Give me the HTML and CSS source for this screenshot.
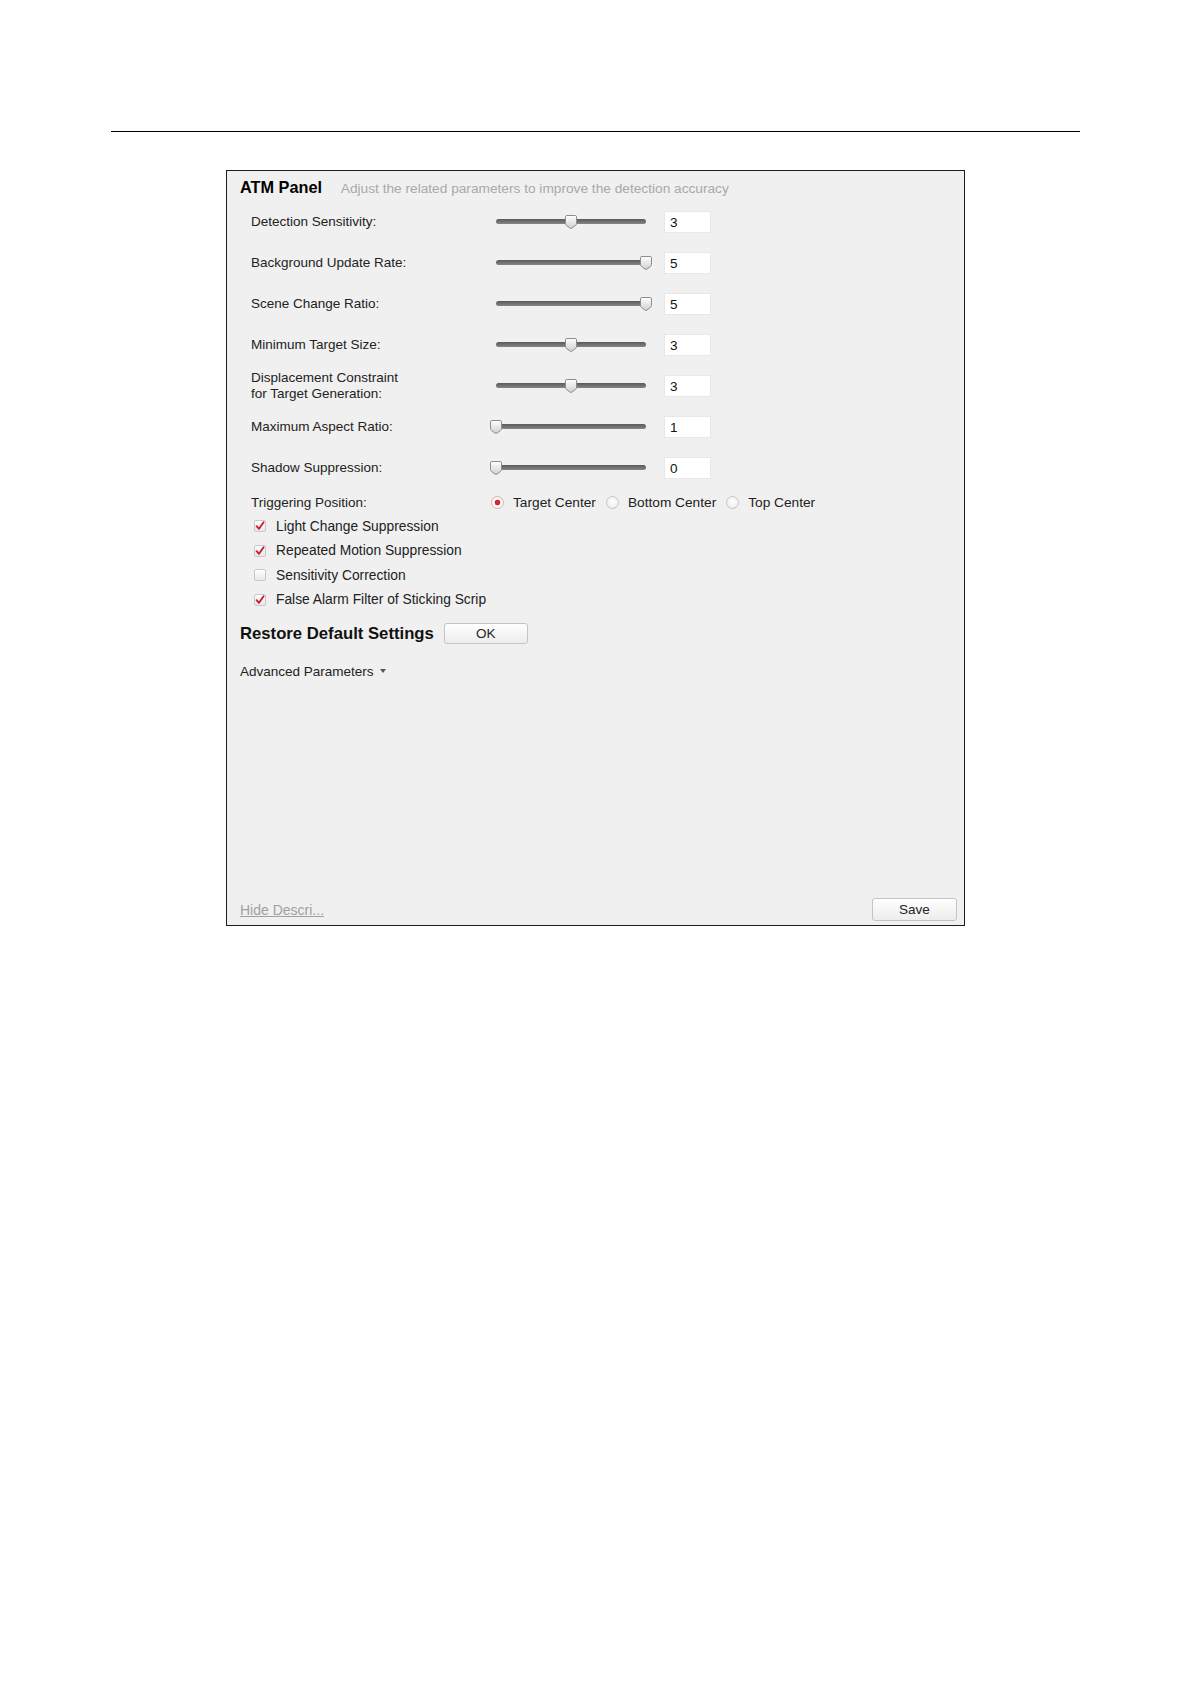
FILE: index.html
```html
<!DOCTYPE html>
<html lang="en">
<head>
<meta charset="utf-8">
<title>ATM Panel</title>
<link rel="stylesheet" href="styles.css">
</head>
<body>
<div class="page">
  <div class="rule"></div>
  <div class="panel">
    <div class="title">
      <span class="title-main">ATM Panel</span>
      <span class="title-desc">Adjust the related parameters to improve the detection accuracy</span>
    </div>

    <div class="params">
      <div class="param">
        <span class="label">Detection Sensitivity:</span>
        <div class="slider"><div class="track"></div><span class="thumb" style="left:50%"><svg viewBox="0 0 12 14" width="12" height="14"><defs><linearGradient id="tg" x1="0" y1="0" x2="0" y2="1"><stop offset="0" stop-color="#ffffff"/><stop offset="1" stop-color="#cfcfcf"/></linearGradient></defs><path d="M1.8 0.5H10.2Q11.5 0.5 11.5 1.8V8.6Q11.5 9.6 10.6 10.4L6.8 13.2Q6 13.7 5.2 13.2L1.4 10.4Q0.5 9.6 0.5 8.6V1.8Q0.5 0.5 1.8 0.5Z" fill="url(#tg)" stroke="#8c8c8c" stroke-width="1"/></svg></span></div>
        <div class="value">3</div>
      </div>
      <div class="param">
        <span class="label">Background Update Rate:</span>
        <div class="slider"><div class="track"></div><span class="thumb" style="left:100%"><svg viewBox="0 0 12 14" width="12" height="14"><path d="M1.8 0.5H10.2Q11.5 0.5 11.5 1.8V8.6Q11.5 9.6 10.6 10.4L6.8 13.2Q6 13.7 5.2 13.2L1.4 10.4Q0.5 9.6 0.5 8.6V1.8Q0.5 0.5 1.8 0.5Z" fill="url(#tg)" stroke="#8c8c8c" stroke-width="1"/></svg></span></div>
        <div class="value">5</div>
      </div>
      <div class="param">
        <span class="label">Scene Change Ratio:</span>
        <div class="slider"><div class="track"></div><span class="thumb" style="left:100%"><svg viewBox="0 0 12 14" width="12" height="14"><path d="M1.8 0.5H10.2Q11.5 0.5 11.5 1.8V8.6Q11.5 9.6 10.6 10.4L6.8 13.2Q6 13.7 5.2 13.2L1.4 10.4Q0.5 9.6 0.5 8.6V1.8Q0.5 0.5 1.8 0.5Z" fill="url(#tg)" stroke="#8c8c8c" stroke-width="1"/></svg></span></div>
        <div class="value">5</div>
      </div>
      <div class="param">
        <span class="label">Minimum Target Size:</span>
        <div class="slider"><div class="track"></div><span class="thumb" style="left:50%"><svg viewBox="0 0 12 14" width="12" height="14"><path d="M1.8 0.5H10.2Q11.5 0.5 11.5 1.8V8.6Q11.5 9.6 10.6 10.4L6.8 13.2Q6 13.7 5.2 13.2L1.4 10.4Q0.5 9.6 0.5 8.6V1.8Q0.5 0.5 1.8 0.5Z" fill="url(#tg)" stroke="#8c8c8c" stroke-width="1"/></svg></span></div>
        <div class="value">3</div>
      </div>
      <div class="param">
        <span class="label">Displacement Constraint<br>for Target Generation:</span>
        <div class="slider"><div class="track"></div><span class="thumb" style="left:50%"><svg viewBox="0 0 12 14" width="12" height="14"><path d="M1.8 0.5H10.2Q11.5 0.5 11.5 1.8V8.6Q11.5 9.6 10.6 10.4L6.8 13.2Q6 13.7 5.2 13.2L1.4 10.4Q0.5 9.6 0.5 8.6V1.8Q0.5 0.5 1.8 0.5Z" fill="url(#tg)" stroke="#8c8c8c" stroke-width="1"/></svg></span></div>
        <div class="value">3</div>
      </div>
      <div class="param">
        <span class="label">Maximum Aspect Ratio:</span>
        <div class="slider"><div class="track"></div><span class="thumb" style="left:0%"><svg viewBox="0 0 12 14" width="12" height="14"><path d="M1.8 0.5H10.2Q11.5 0.5 11.5 1.8V8.6Q11.5 9.6 10.6 10.4L6.8 13.2Q6 13.7 5.2 13.2L1.4 10.4Q0.5 9.6 0.5 8.6V1.8Q0.5 0.5 1.8 0.5Z" fill="url(#tg)" stroke="#8c8c8c" stroke-width="1"/></svg></span></div>
        <div class="value">1</div>
      </div>
      <div class="param">
        <span class="label">Shadow Suppression:</span>
        <div class="slider"><div class="track"></div><span class="thumb" style="left:0%"><svg viewBox="0 0 12 14" width="12" height="14"><path d="M1.8 0.5H10.2Q11.5 0.5 11.5 1.8V8.6Q11.5 9.6 10.6 10.4L6.8 13.2Q6 13.7 5.2 13.2L1.4 10.4Q0.5 9.6 0.5 8.6V1.8Q0.5 0.5 1.8 0.5Z" fill="url(#tg)" stroke="#8c8c8c" stroke-width="1"/></svg></span></div>
        <div class="value">0</div>
      </div>
    </div>

    <div class="trigger">
      <span class="label">Triggering Position:</span>
      <div class="radios">
        <span class="radio checked"></span><span class="radio-text">Target Center</span>
        <span class="radio"></span><span class="radio-text">Bottom Center</span>
        <span class="radio"></span><span class="radio-text">Top Center</span>
      </div>
    </div>

    <ul class="checks">
      <li class="check-row"><span class="box"><svg viewBox="0 0 12 12" width="12" height="12"><path d="M2.6 6.2L5 8.8L9.6 2.2" fill="none" stroke="#cc1f2e" stroke-width="1.9" stroke-linecap="round" stroke-linejoin="round"/></svg></span>Light Change Suppression</li>
      <li class="check-row"><span class="box"><svg viewBox="0 0 12 12" width="12" height="12"><path d="M2.6 6.2L5 8.8L9.6 2.2" fill="none" stroke="#cc1f2e" stroke-width="1.9" stroke-linecap="round" stroke-linejoin="round"/></svg></span>Repeated Motion Suppression</li>
      <li class="check-row"><span class="box"></span>Sensitivity Correction</li>
      <li class="check-row"><span class="box"><svg viewBox="0 0 12 12" width="12" height="12"><path d="M2.6 6.2L5 8.8L9.6 2.2" fill="none" stroke="#cc1f2e" stroke-width="1.9" stroke-linecap="round" stroke-linejoin="round"/></svg></span>False Alarm Filter of Sticking Scrip</li>
    </ul>

    <div class="restore">
      <span class="restore-title">Restore Default Settings</span>
      <button class="btn btn-ok">OK</button>
    </div>

    <div class="advanced">Advanced Parameters<span class="caret"></span></div>

    <div class="footer">
      <a class="hide-link">Hide Descri...</a>
      <button class="btn btn-save">Save</button>
    </div>
  </div>
</div>
</body>
</html>
```

FILE: styles.css
```css
html, body {
  margin: 0;
  padding: 0;
  background: #ffffff;
}

body {
  font-family: "Liberation Sans", Arial, sans-serif;
  font-size: 13.5px;
  color: #222222;
}

.page {
  padding: 131px 0 0 111px;
}

.rule {
  width: 969px;
  height: 0;
  border-top: 1px solid #000000;
}

.panel {
  box-sizing: border-box;
  width: 739px;
  height: 756px;
  margin: 38px 0 0 115px;
  border: 1px solid #1e1e1e;
  background: #f0f0f0;
  padding-top: 6px;
  display: flex;
  flex-direction: column;
}

.title {
  height: 20px;
  line-height: 20px;
  padding-left: 13px;
  white-space: nowrap;
}

.title-main {
  font-size: 16.3px;
  font-weight: bold;
  color: #000000;
}

.title-desc {
  margin-left: 15px;
  font-size: 13.7px;
  color: #a9a9a9;
}

.params {
  padding-top: 4px;
  padding-left: 24px;
}

.param {
  height: 41px;
  display: grid;
  grid-template-columns: 227px 150px 47px;
  column-gap: 18px;
  align-items: center;
}

.label {
  line-height: 16px;
}

.slider {
  position: relative;
  height: 14px;
}

.track {
  position: absolute;
  left: 0;
  right: 0;
  top: 4px;
  height: 5px;
  border-radius: 3px;
  background: linear-gradient(#5a5a5a, #858585);
}

.thumb {
  position: absolute;
  top: 0;
  width: 12px;
  height: 14px;
  transform: translateX(-50%);
}

.thumb svg {
  display: block;
}

.value {
  box-sizing: border-box;
  height: 22px;
  line-height: 22px;
  padding-left: 5px;
  background: #ffffff;
  border: 1px solid #e8e8e8;
  color: #111111;
}

.trigger {
  height: 23px;
  padding-top: 3px;
  padding-left: 24px;
  display: grid;
  grid-template-columns: 240px auto;
  align-items: center;
}

.radios {
  display: flex;
  align-items: center;
  font-size: 13.7px;
}

.radio {
  box-sizing: border-box;
  width: 13px;
  height: 13px;
  border-radius: 50%;
  border: 1px solid #c6c6c6;
  background: radial-gradient(circle at 50% 40%, #ffffff 0%, #e8e8e8 100%);
  margin-right: 9px;
  position: relative;
}

.radio.checked {
  border-color: #d8b0b0;
  background: radial-gradient(circle, #d42a2a 0, #d42a2a 2.6px, #ffffff 3.2px, #f4f4f4 100%);
}

.radio-text {
  margin-right: 10px;
}

.checks {
  list-style: none;
  margin: 0;
  padding: 0 0 0 27px;
  font-size: 13.8px;
}

.check-row {
  height: 24.5px;
  display: flex;
  align-items: center;
}

.box {
  box-sizing: border-box;
  width: 12px;
  height: 12px;
  border: 1px solid #c8c8c8;
  border-radius: 2px;
  background: linear-gradient(#ffffff, #e8e8e8);
  margin-right: 10px;
  position: relative;
}

.box svg {
  position: absolute;
  left: -1px;
  top: -1px;
}

.restore {
  margin-top: 11px;
  height: 21px;
  padding-left: 13px;
  display: flex;
  align-items: center;
}

.restore-title {
  font-size: 16.7px;
  font-weight: bold;
  color: #111111;
}

.btn {
  box-sizing: border-box;
  font-family: "Liberation Sans", Arial, sans-serif;
  font-size: 13.5px;
  color: #222222;
  background: linear-gradient(#ffffff, #ececec);
  border: 1px solid #c4c4c4;
  border-radius: 3px;
  padding: 0;
  margin: 0;
}

.btn-ok {
  width: 84px;
  height: 21px;
  margin-left: 10px;
}

.advanced {
  margin-top: 20px;
  padding-left: 13px;
  height: 16px;
  line-height: 16px;
  display: flex;
  align-items: center;
}

.caret {
  width: 0;
  height: 0;
  border-left: 3.5px solid transparent;
  border-right: 3.5px solid transparent;
  border-top: 4px solid #555555;
  margin-left: 6px;
  margin-top: -3px;
}

.footer {
  margin-top: auto;
  padding: 0 7px 4px 13px;
  display: flex;
  justify-content: space-between;
  align-items: center;
}

.hide-link {
  font-size: 14px;
  line-height: 16px;
  color: #a0a0a0;
  text-decoration: underline;
}

.btn-save {
  width: 85px;
  height: 23px;
}
```
